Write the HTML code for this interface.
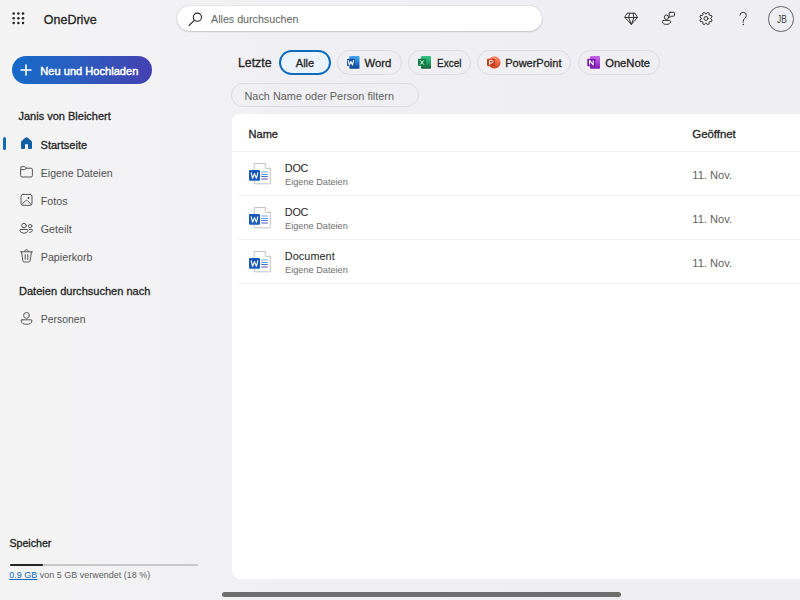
<!DOCTYPE html>
<html><head><meta charset="utf-8"><style>
html,body{margin:0;padding:0;width:800px;height:600px;overflow:hidden}
body{position:relative;font-family:"Liberation Sans",sans-serif;background:linear-gradient(90deg,#f4f4f5 0%,#f2f2f4 22%,#f0f0f4 35%,#efeff3 100%)}
.t{position:absolute;white-space:nowrap;line-height:20px}
.i{position:absolute;overflow:visible}
.search{position:absolute;left:177px;top:5.6px;width:365.4px;height:25.8px;border-radius:13px;background:#fff;box-shadow:0 0 1.5px rgba(0,0,0,.22),0 1px 1.5px rgba(0,0,0,.14)}
.btn{position:absolute;left:12px;top:56px;width:139.5px;height:28px;border-radius:14px;background:linear-gradient(100deg,#156ac8 0%,#2a5ec0 45%,#4540b0 100%)}
.pill{position:absolute;top:50.2px;height:24.6px;box-sizing:border-box;border:1px solid #dcdce0;border-radius:13px}
.alle{position:absolute;left:279.2px;top:50.2px;width:51.6px;height:24.8px;box-sizing:border-box;border:2px solid #0f6cbd;border-radius:13px;background:#ebf3fc}
.filter{position:absolute;left:231.3px;top:83.2px;width:187.5px;height:24.3px;box-sizing:border-box;border:1px solid #dcdce0;border-radius:13px}
.card{position:absolute;left:232px;top:114.4px;width:600px;height:464.2px;background:#fff;border-radius:8px}
.sep{position:absolute;left:232px;width:568px;height:1px;background:#f2f2f2}
.av{position:absolute;left:768.4px;top:6.2px;width:25.5px;height:25.5px;box-sizing:border-box;border:1px solid #616161;border-radius:50%}
.bar{position:absolute;left:9.5px;top:564.2px;width:188.5px;height:1.6px;background:#c8c8c8;border-radius:1px}
.barf{position:absolute;left:9.5px;top:563.7px;width:33.5px;height:2.1px;background:#242424;border-radius:1px}
.scroll{position:absolute;left:222px;top:592px;width:399px;height:5px;border-radius:3px;background:#6e6e6e}
</style></head><body>
<div class="search"></div>
<div class="btn"></div>
<div class="alle"></div>
<div class="pill" style="left:337px;width:65px"></div>
<div class="pill" style="left:408.2px;width:63px"></div>
<div class="pill" style="left:477.2px;width:94.3px"></div>
<div class="pill" style="left:577.7px;width:82.5px"></div>
<div class="filter"></div>
<div class="card"></div>
<div class="sep" style="top:151px;left:232px"></div>
<div class="sep" style="top:195px;left:238px"></div>
<div class="sep" style="top:239px;left:238px"></div>
<div class="sep" style="top:283px;left:238px"></div>
<div class="bar"></div><div class="barf"></div>
<div class="scroll"></div>
<svg class="i" style="left:0px;top:0px;" width="40" height="40" viewBox="0 0 40 40"><circle cx="13.7" cy="13.5" r="1.25" fill="#242424"/><circle cx="13.7" cy="18.25" r="1.25" fill="#242424"/><circle cx="13.7" cy="23.0" r="1.25" fill="#242424"/><circle cx="18.35" cy="13.5" r="1.25" fill="#242424"/><circle cx="18.35" cy="18.25" r="1.25" fill="#242424"/><circle cx="18.35" cy="23.0" r="1.25" fill="#242424"/><circle cx="23.0" cy="13.5" r="1.25" fill="#242424"/><circle cx="23.0" cy="18.25" r="1.25" fill="#242424"/><circle cx="23.0" cy="23.0" r="1.25" fill="#242424"/></svg>
<svg class="i" style="left:186px;top:11px;" width="18" height="18" viewBox="0 0 18 18"><circle cx="11.4" cy="6.2" r="4.1" fill="none" stroke="#242424" stroke-width="1.1"/><path d="M8.5 9.1 L3.2 14.4" stroke="#242424" stroke-width="1.2" stroke-linecap="round"/></svg>
<svg class="i" style="left:621px;top:8px;" width="20" height="20" viewBox="0 0 20 20"><path fill="none" stroke="#2a2a2a" stroke-width="0.95" stroke-linejoin="round" stroke-linecap="round" d="M6.5 5.2 H14 L16.5 9.5 L10.3 16.5 L4 9.5 Z M4 9.5 H16.5 M8.7 5.2 L7.6 9.5 L10.3 16.5 L13 9.5 L12 5.2"/></svg>
<svg class="i" style="left:659px;top:8px;" width="20" height="20" viewBox="0 0 20 20"><circle fill="none" stroke="#2a2a2a" stroke-width="0.95" stroke-linejoin="round" stroke-linecap="round" cx="7.5" cy="9.2" r="2.2"/><path fill="none" stroke="#2a2a2a" stroke-width="0.95" stroke-linejoin="round" stroke-linecap="round" d="M4.6 12.4 H10.4 Q11.6 12.4 11.6 13.6 Q11.6 16.4 7.5 16.4 Q3.4 16.4 3.4 13.6 Q3.4 12.4 4.6 12.4 Z"/><path fill="none" stroke="#2a2a2a" stroke-width="0.95" stroke-linejoin="round" stroke-linecap="round" d="M11 4.3 H14.7 Q15.5 4.3 15.5 5.1 V7.4 Q15.5 8.2 14.7 8.2 H12.3 L11 9.5 V8.2 Q10.2 8.2 10.2 7.4 V5.1 Q10.2 4.3 11 4.3 Z"/></svg>
<svg class="i" style="left:696px;top:8px;" width="20" height="20" viewBox="0 0 20 20"><path fill="none" stroke="#2a2a2a" stroke-width="0.95" stroke-linejoin="round" stroke-linecap="round" d="M10.45 5.82 L11.47 4.37 L13.29 5.13 L12.99 6.87 L13.63 7.51 L15.37 7.21 L16.13 9.03 L14.68 10.05 L14.68 10.95 L16.13 11.97 L15.37 13.79 L13.63 13.49 L12.99 14.13 L13.29 15.87 L11.47 16.63 L10.45 15.18 L9.55 15.18 L8.53 16.63 L6.71 15.87 L7.01 14.13 L6.37 13.49 L4.63 13.79 L3.87 11.97 L5.32 10.95 L5.32 10.05 L3.87 9.03 L4.63 7.21 L6.37 7.51 L7.01 6.87 L6.71 5.13 L8.53 4.37 L9.55 5.82Z"/><circle fill="none" stroke="#2a2a2a" stroke-width="0.95" stroke-linejoin="round" stroke-linecap="round" cx="10" cy="10.5" r="2"/></svg>
<svg class="i" style="left:733px;top:8px;" width="20" height="20" viewBox="0 0 20 20"><path fill="none" stroke="#2a2a2a" stroke-width="0.95" stroke-linejoin="round" stroke-linecap="round" stroke-width="1.1" d="M6.9 7.2 Q7.2 4.3 10.2 4.3 Q13.3 4.4 13.3 7.3 Q13.3 9.2 11.5 10.6 Q10.2 11.7 10.2 13.6 V14.3"/><circle cx="10.3" cy="16.5" r="0.7" fill="#242424"/></svg>
<div class="av"></div>
<svg class="i" style="left:20px;top:64px;" width="12" height="12" viewBox="0 0 12 12"><path d="M6 1 V11 M1 6 H11" stroke="#fff" stroke-width="1.6" stroke-linecap="round"/></svg>
<div style="position:absolute;left:2.8px;top:137.3px;width:2.9px;height:12.8px;border-radius:1.5px;background:#0f6cbd"></div>
<svg class="i" style="left:16px;top:134px;" width="20" height="20" viewBox="0 0 20 20"><path fill="#115ea3" d="M9.3 3.7 Q10.5 2.7 11.7 3.7 L15.4 7 Q16 7.5 16 8.3 V14 Q16 14.9 15.1 14.9 H12.9 Q12 14.9 12 14 V10.2 H9 V14 Q9 14.9 8.1 14.9 H5.9 Q5 14.9 5 14 V8.3 Q5 7.5 5.6 7 Z"/></svg>
<svg class="i" style="left:16px;top:162px;" width="20" height="20" viewBox="0 0 20 20"><path fill="none" stroke="#555555" stroke-width="1" stroke-linejoin="round" stroke-linecap="round" d="M4.6 6 Q4.6 4.6 6 4.6 H8.3 Q9 4.6 9.5 5.2 L10.2 6.2 H15 Q16.4 6.2 16.4 7.6 V13.6 Q16.4 15 15 15 H6 Q4.6 15 4.6 13.6 Z M4.6 7.6 H8.5 Q9.3 7.6 9.8 7 L10.2 6.2"/></svg>
<svg class="i" style="left:16px;top:190px;" width="20" height="20" viewBox="0 0 20 20"><rect fill="none" stroke="#555555" stroke-width="1" stroke-linejoin="round" stroke-linecap="round" x="5" y="4.4" width="11" height="10.9" rx="2"/><path fill="none" stroke="#555555" stroke-width="1" stroke-linejoin="round" stroke-linecap="round" d="M5.6 14.6 L9.6 10.6 Q10.5 9.8 11.4 10.6 L15.4 14.6"/><circle cx="12.5" cy="7.9" r="1" fill="#424242"/></svg>
<svg class="i" style="left:16px;top:218px;" width="20" height="20" viewBox="0 0 20 20"><circle fill="none" stroke="#555555" stroke-width="1" stroke-linejoin="round" stroke-linecap="round" cx="8" cy="7.6" r="2.3"/><path fill="none" stroke="#555555" stroke-width="1" stroke-linejoin="round" stroke-linecap="round" d="M4.5 11.5 H11.5 Q12.2 11.5 12.1 12.4 Q11.6 15.2 8 15.2 Q4.4 15.2 3.9 12.4 Q3.8 11.5 4.5 11.5 Z"/><circle fill="none" stroke="#555555" stroke-width="1" stroke-linejoin="round" stroke-linecap="round" cx="14.2" cy="8.1" r="1.7"/><path fill="none" stroke="#555555" stroke-width="1" stroke-linejoin="round" stroke-linecap="round" d="M13.3 11.5 H15.9 Q16.6 11.5 16.5 12.3 Q16.2 14.3 13.6 14.4"/></svg>
<svg class="i" style="left:16px;top:246px;" width="20" height="20" viewBox="0 0 20 20"><path fill="none" stroke="#555555" stroke-width="1" stroke-linejoin="round" stroke-linecap="round" d="M8.7 5.4 Q9 3.6 10.5 3.6 Q12 3.6 12.3 5.4 M4.5 5.8 H16.5 M5.6 6 L6.9 14.8 Q7.1 16 8.3 16 H12.7 Q13.9 16 14.1 14.8 L15.4 6 M9.2 8.6 V13.4 M11.8 8.6 V13.4"/></svg>
<svg class="i" style="left:16px;top:308px;" width="20" height="20" viewBox="0 0 20 20"><circle fill="none" stroke="#555555" stroke-width="1" stroke-linejoin="round" stroke-linecap="round" cx="10.5" cy="7.4" r="2.9"/><path fill="none" stroke="#555555" stroke-width="1" stroke-linejoin="round" stroke-linecap="round" d="M6 11.8 H15 Q16 11.8 15.9 12.9 Q15.5 16.3 10.5 16.3 Q5.5 16.3 5.1 12.9 Q5 11.8 6 11.8 Z"/></svg>
<svg class="i" style="left:344px;top:53px;" width="18" height="18" viewBox="0 0 18 18"><defs><linearGradient id="wg" x1="0" y1="0" x2="0" y2="1"><stop offset="0" stop-color="#41a5ee"/><stop offset=".5" stop-color="#2b7cd3"/><stop offset="1" stop-color="#103f91"/></linearGradient></defs><rect x="5.3" y="3" width="10.2" height="12.7" rx="1" fill="url(#wg)"/><rect x="3" y="5.7" width="8" height="7.3" rx=".8" fill="#1a4fa8"/><path d="M4.1 7.1 L5.3 11.9 L6.9 8.6 L8.5 11.9 L9.7 7.1" fill="none" stroke="#fff" stroke-width="1.15" stroke-linejoin="round"/></svg>
<svg class="i" style="left:415px;top:53px;" width="18" height="18" viewBox="0 0 18 18"><defs><linearGradient id="xg" x1="0" y1="0" x2="0" y2="1"><stop offset="0" stop-color="#33c481"/><stop offset=".5" stop-color="#21a366"/><stop offset="1" stop-color="#185c37"/></linearGradient></defs><rect x="6" y="3" width="10" height="12.7" rx="1" fill="url(#xg)"/><rect x="3" y="5.8" width="8" height="7.2" rx=".8" fill="#107c41"/><path d="M5.3 7.6 L8.7 11.4 M8.7 7.6 L5.3 11.4" stroke="#fff" stroke-width="1" stroke-linecap="round"/></svg>
<svg class="i" style="left:484px;top:53px;" width="18" height="18" viewBox="0 0 18 18"><defs><linearGradient id="pg" x1="0" y1="0" x2="0" y2="1"><stop offset="0" stop-color="#ff8f6b"/><stop offset=".5" stop-color="#ed6c47"/><stop offset="1" stop-color="#c43e1c"/></linearGradient></defs><circle cx="10.4" cy="9.4" r="6.2" fill="url(#pg)"/><rect x="3" y="5.8" width="8" height="7.2" rx=".8" fill="#c43e1c"/><path d="M5.6 12 V7.3 H7.4 Q9 7.3 9 8.7 Q9 10.1 7.4 10.1 H5.6" fill="none" stroke="#fff" stroke-width="1"/></svg>
<svg class="i" style="left:584px;top:53px;" width="18" height="18" viewBox="0 0 18 18"><defs><linearGradient id="og" x1="0" y1="0" x2="0" y2="1"><stop offset="0" stop-color="#ca64ea"/><stop offset=".5" stop-color="#ae4bd5"/><stop offset="1" stop-color="#7719aa"/></linearGradient></defs><rect x="6" y="3" width="10" height="12.7" rx="1" fill="url(#og)"/><rect x="3.3" y="5.8" width="8.2" height="7.5" rx=".8" fill="#7719aa"/><path d="M5.6 11.8 V7.4 L9.2 11.8 V7.4" fill="none" stroke="#fff" stroke-width="1.1" stroke-linejoin="round"/></svg>
<svg class="i" style="left:248px;top:161px;" width="26" height="26" viewBox="0 0 26 26"><path d="M6.2 2.5 H17.2 L22.3 7.6 V22.3 Q22.3 22.8 21.8 22.8 H6.7 Q6.2 22.8 6.2 22.3 Z" fill="#fff" stroke="#c4c4c4" stroke-width="1"/><path d="M17.2 2.5 V6.6 Q17.2 7.6 18.2 7.6 H22.3" fill="#fff" stroke="#c4c4c4" stroke-width="1"/><rect x="1" y="9" width="11" height="10.7" rx="1" fill="#185abd"/><path d="M3.1 11.5 L4.6 17.3 L6.5 12.6 L8.4 17.3 L9.9 11.5" fill="none" stroke="#fff" stroke-width="1.1" stroke-linejoin="round"/><path d="M13.2 11 H19.8" stroke="#b5d3f3" stroke-width="2"/><path d="M13.2 13.5 H19.8" stroke="#4b98e4" stroke-width="1"/><path d="M13.2 15.5 H19.8" stroke="#3f6fc6" stroke-width="1"/><path d="M13.2 18 H19.8" stroke="#a8acdc" stroke-width="2"/></svg>
<svg class="i" style="left:248px;top:205px;" width="26" height="26" viewBox="0 0 26 26"><path d="M6.2 2.5 H17.2 L22.3 7.6 V22.3 Q22.3 22.8 21.8 22.8 H6.7 Q6.2 22.8 6.2 22.3 Z" fill="#fff" stroke="#c4c4c4" stroke-width="1"/><path d="M17.2 2.5 V6.6 Q17.2 7.6 18.2 7.6 H22.3" fill="#fff" stroke="#c4c4c4" stroke-width="1"/><rect x="1" y="9" width="11" height="10.7" rx="1" fill="#185abd"/><path d="M3.1 11.5 L4.6 17.3 L6.5 12.6 L8.4 17.3 L9.9 11.5" fill="none" stroke="#fff" stroke-width="1.1" stroke-linejoin="round"/><path d="M13.2 11 H19.8" stroke="#b5d3f3" stroke-width="2"/><path d="M13.2 13.5 H19.8" stroke="#4b98e4" stroke-width="1"/><path d="M13.2 15.5 H19.8" stroke="#3f6fc6" stroke-width="1"/><path d="M13.2 18 H19.8" stroke="#a8acdc" stroke-width="2"/></svg>
<svg class="i" style="left:248px;top:249px;" width="26" height="26" viewBox="0 0 26 26"><path d="M6.2 2.5 H17.2 L22.3 7.6 V22.3 Q22.3 22.8 21.8 22.8 H6.7 Q6.2 22.8 6.2 22.3 Z" fill="#fff" stroke="#c4c4c4" stroke-width="1"/><path d="M17.2 2.5 V6.6 Q17.2 7.6 18.2 7.6 H22.3" fill="#fff" stroke="#c4c4c4" stroke-width="1"/><rect x="1" y="9" width="11" height="10.7" rx="1" fill="#185abd"/><path d="M3.1 11.5 L4.6 17.3 L6.5 12.6 L8.4 17.3 L9.9 11.5" fill="none" stroke="#fff" stroke-width="1.1" stroke-linejoin="round"/><path d="M13.2 11 H19.8" stroke="#b5d3f3" stroke-width="2"/><path d="M13.2 13.5 H19.8" stroke="#4b98e4" stroke-width="1"/><path d="M13.2 15.5 H19.8" stroke="#3f6fc6" stroke-width="1"/><path d="M13.2 18 H19.8" stroke="#a8acdc" stroke-width="2"/></svg>
<div class="t" style="left:43.80px;top:9.57px;font-size:12.5px;font-weight:normal;color:#242424;-webkit-text-stroke:0.3px #242424;">OneDrive</div>
<div class="t" style="left:211.00px;top:9.39px;font-size:10.7px;font-weight:normal;color:#616161;">Alles durchsuchen</div>
<div class="t" style="left:776.80px;top:9.87px;font-size:10.2px;font-weight:normal;color:#424242;transform:scaleX(0.83);transform-origin:0 0">JB</div>
<div class="t" style="left:40.30px;top:60.95px;font-size:11.1px;font-weight:normal;color:#ffffff;-webkit-text-stroke:0.45px #fff">Neu und Hochladen</div>
<div class="t" style="left:18.50px;top:106.39px;font-size:11px;font-weight:normal;color:#242424;-webkit-text-stroke:0.3px #242424;">Janis von Bleichert</div>
<div class="t" style="left:40.60px;top:134.69px;font-size:11px;font-weight:normal;color:#242424;-webkit-text-stroke:0.3px #242424;">Startseite</div>
<div class="t" style="left:40.80px;top:162.86px;font-size:10.5px;font-weight:normal;color:#505050;">Eigene Dateien</div>
<div class="t" style="left:40.80px;top:190.79px;font-size:10.7px;font-weight:normal;color:#505050;">Fotos</div>
<div class="t" style="left:40.80px;top:218.79px;font-size:10.7px;font-weight:normal;color:#505050;">Geteilt</div>
<div class="t" style="left:40.80px;top:246.79px;font-size:10.7px;font-weight:normal;color:#505050;">Papierkorb</div>
<div class="t" style="left:19.00px;top:280.97px;font-size:11.05px;font-weight:normal;color:#242424;-webkit-text-stroke:0.3px #242424;">Dateien durchsuchen nach</div>
<div class="t" style="left:40.80px;top:310.38px;font-size:10.45px;font-weight:normal;color:#505050;">Personen</div>
<div class="t" style="left:9.50px;top:533.23px;font-size:10.6px;font-weight:normal;color:#1a1a1a;-webkit-text-stroke:0.3px #1a1a1a;">Speicher</div>
<div class="t" style="left:9.30px;top:564.88px;font-size:9px;font-weight:normal;color:#616161;"><span style="color:#0f6cbd;text-decoration:underline">0.9 GB</span> von 5 GB verwendet (18 %)</div>
<div class="t" style="left:238.00px;top:52.74px;font-size:12.3px;font-weight:normal;color:#242424;-webkit-text-stroke:0.3px #242424;">Letzte</div>
<div class="t" style="left:295.80px;top:52.89px;font-size:11px;font-weight:normal;color:#242424;-webkit-text-stroke:0.3px #242424;">Alle</div>
<div class="t" style="left:364.50px;top:52.68px;font-size:11.3px;font-weight:normal;color:#242424;-webkit-text-stroke:0.3px #242424;">Word</div>
<div class="t" style="left:436.60px;top:52.69px;font-size:11px;font-weight:normal;color:#242424;-webkit-text-stroke:0.3px #242424;transform:scaleX(0.91);transform-origin:0 0">Excel</div>
<div class="t" style="left:505.20px;top:52.69px;font-size:11px;font-weight:normal;color:#242424;-webkit-text-stroke:0.3px #242424;">PowerPoint</div>
<div class="t" style="left:605.20px;top:52.62px;font-size:11.2px;font-weight:normal;color:#242424;-webkit-text-stroke:0.3px #242424;">OneNote</div>
<div class="t" style="left:244.50px;top:85.62px;font-size:10.9px;font-weight:normal;color:#616161;">Nach Name oder Person filtern</div>
<div class="t" style="left:248.60px;top:124.09px;font-size:11px;font-weight:normal;color:#242424;-webkit-text-stroke:0.3px #242424;">Name</div>
<div class="t" style="left:692.30px;top:123.95px;font-size:11.4px;font-weight:normal;color:#242424;-webkit-text-stroke:0.3px #242424;">Geöffnet</div>
<div class="t" style="left:284.80px;top:157.96px;font-size:10.8px;font-weight:normal;color:#242424;letter-spacing:-0.2px">DOC</div>
<div class="t" style="left:285.00px;top:172.01px;font-size:9.2px;font-weight:normal;color:#707070;">Eigene Dateien</div>
<div class="t" style="left:692.30px;top:164.65px;font-size:11.1px;font-weight:normal;color:#616161;">11. Nov.</div>
<div class="t" style="left:284.80px;top:201.96px;font-size:10.8px;font-weight:normal;color:#242424;letter-spacing:-0.2px">DOC</div>
<div class="t" style="left:285.00px;top:216.01px;font-size:9.2px;font-weight:normal;color:#707070;">Eigene Dateien</div>
<div class="t" style="left:692.30px;top:208.65px;font-size:11.1px;font-weight:normal;color:#616161;">11. Nov.</div>
<div class="t" style="left:284.80px;top:245.96px;font-size:10.8px;font-weight:normal;color:#242424;letter-spacing:0.1px">Document</div>
<div class="t" style="left:285.00px;top:260.01px;font-size:9.2px;font-weight:normal;color:#707070;">Eigene Dateien</div>
<div class="t" style="left:692.30px;top:252.65px;font-size:11.1px;font-weight:normal;color:#616161;">11. Nov.</div>
</body></html>
